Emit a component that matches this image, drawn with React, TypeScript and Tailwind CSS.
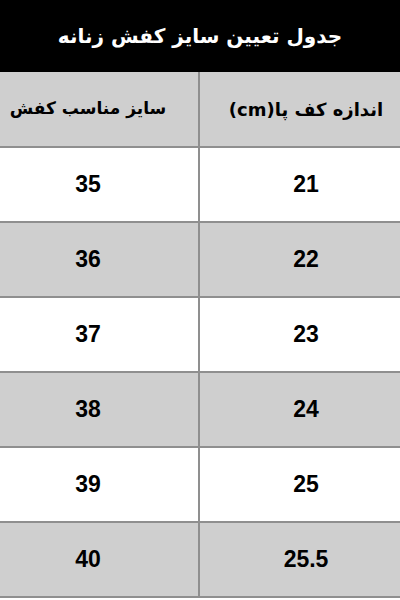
import * as React from "react";

const ROWS: [string, string][] = [
  ["21", "35"],
  ["22", "36"],
  ["23", "37"],
  ["24", "38"],
  ["25", "39"],
  ["25.5", "40"],
];

const fa = { fontFamily: '"DejaVu Sans", "Noto Sans", sans-serif' };
const num = { fontFamily: '"Liberation Sans", Arial, sans-serif' };

function Row({ right, left, gray, header }: { right: string; left: string; gray: boolean; header?: boolean }) {
  return (
    <div
      dir="rtl"
      className={`grid grid-cols-[200px_200px] border-b-2 border-[#8f8f8f] ${header ? "h-[76px]" : "h-[75px]"} ${
        gray ? "bg-[#cfcfcf]" : "bg-white"
      }`}
    >
      <div
        className="flex items-center justify-center pl-[12px] text-black font-bold"
        style={header ? fa : num}
      >
        <span className={header ? "text-[18px]" : "text-[23px]"}>{right}</span>
      </div>
      <div
        className="flex items-center justify-center border-r-2 border-[#8f8f8f] pr-[22px] text-black font-bold"
        style={header ? fa : num}
      >
        <span className={header ? "text-[17px]" : "text-[23px]"}>{left}</span>
      </div>
    </div>
  );
}

export default function App() {
  return (
    <div className="w-[400px] h-[600px] bg-white overflow-hidden">
      {/* title bar */}
      <div className="h-[72px] bg-black flex items-center justify-center">
        <h1 dir="rtl" className="text-white text-[20px] font-bold" style={fa}>
          جدول تعیین سایز کفش زنانه
        </h1>
      </div>

      <Row right="اندازه کف پا(cm)" left="سایز مناسب کفش" gray header />
      {ROWS.map(([r, l], i) => (
        <Row key={r} right={r} left={l} gray={i % 2 === 1} />
      ))}
    </div>
  );
}
